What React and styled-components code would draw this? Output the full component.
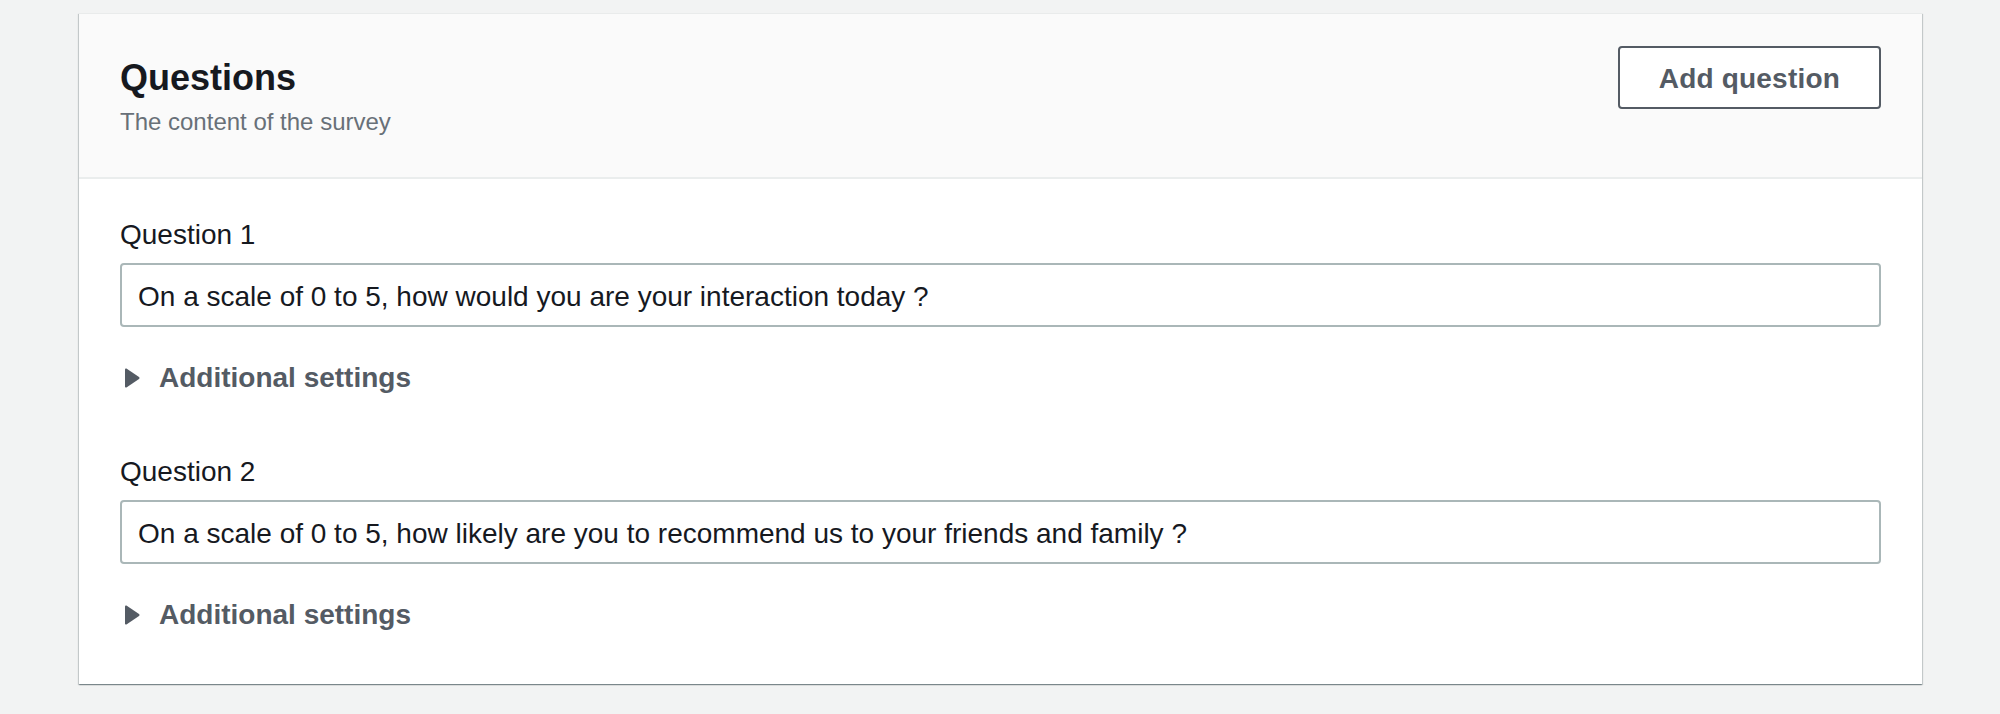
import React from 'react';
import styled, { createGlobalStyle } from 'styled-components';

const GlobalStyle = createGlobalStyle`
  html, body {
    margin: 0;
    padding: 0;
    background: #f2f3f3;
    font-family: "Liberation Sans", Arial, Helvetica, sans-serif;
    color: #16191f;
  }
`;

const Page = styled.main`
  padding: 13px 78px 30px 79px;
`;

const Card = styled.section`
  background: #ffffff;
  box-shadow:
    0 1px 1px 0 rgba(0, 28, 36, 0.3),
    1px 1px 1px 0 rgba(0, 28, 36, 0.15),
    -1px 1px 1px 0 rgba(0, 28, 36, 0.15);
  border-top: 1px solid #e9ebeb;
`;

const Header = styled.header`
  display: flex;
  justify-content: space-between;
  align-items: flex-start;
  padding: 32px 41px 39px 41px;
  background: #fafafa;
  border-bottom: 2px solid #eaeded;
`;

const TitleBox = styled.div`
  padding-top: 10px;
`;

const Title = styled.h2`
  margin: 0;
  font-size: 36px;
  line-height: 44px;
  font-weight: 700;
  color: #16191f;
`;

const Description = styled.p`
  margin: 6px 0 0;
  font-size: 24px;
  line-height: 32px;
  color: #687078;
`;

const Button = styled.button`
  height: 63px;
  padding: 2px 39px 0;
  background: #ffffff;
  border: 2px solid #545b64;
  border-radius: 4px;
  color: #545b64;
  font-family: inherit;
  font-size: 28px;
  font-weight: 700;
  letter-spacing: 0.2px;
  cursor: pointer;
`;

const Body = styled.div`
  padding: 37px 41px 50px 41px;
`;

const Question = styled.div`
  & + & {
    margin-top: 56px;
  }
`;

const Label = styled.label`
  display: block;
  font-size: 28px;
  line-height: 38px;
  color: #16191f;
  margin-bottom: 9px;
`;

const Input = styled.input`
  display: block;
  box-sizing: border-box;
  width: 100%;
  height: 64px;
  padding: 4px 16px 0;
  border: 2px solid #aab7b8;
  border-radius: 4px;
  background: #ffffff;
  font-family: inherit;
  font-size: 28px;
  color: #16191f;
  outline: none;
`;

const Expander = styled.div`
  display: flex;
  align-items: center;
  gap: 19px;
  margin-top: 30px;
  padding: 2px 0 0 4px;
  height: 40px;
  box-sizing: border-box;
  font-size: 28px;
  font-weight: 700;
  color: #545b64;
  cursor: pointer;

  svg {
    flex: none;
    display: block;
  }
`;

const Caret = () => (
  <svg width="16" height="20" viewBox="0 0 16 20" aria-hidden="true">
    <path
      d="M1 1.6 C1 0.6 1.9 0.1 2.8 0.7 L15 9 C15.7 9.5 15.7 10.5 15 11 L2.8 19.3 C1.9 19.9 1 19.4 1 18.4 Z"
      fill="#545b64"
    />
  </svg>
);

const questions = [
  'On a scale of 0 to 5, how would you are your interaction today ?',
  'On a scale of 0 to 5, how likely are you to recommend us to your friends and family ?',
];

export default function App() {
  return (
    <>
      <GlobalStyle />
      <Page>
        <Card>
          <Header>
            <TitleBox>
              <Title>Questions</Title>
              <Description>The content of the survey</Description>
            </TitleBox>
            <Button type="button">Add question</Button>
          </Header>
          <Body>
            {questions.map((q, i) => (
              <Question key={i}>
                <Label htmlFor={`q${i}`}>Question {i + 1}</Label>
                <Input id={`q${i}`} defaultValue={q} />
                <Expander>
                  <Caret />
                  Additional settings
                </Expander>
              </Question>
            ))}
          </Body>
        </Card>
      </Page>
    </>
  );
}
